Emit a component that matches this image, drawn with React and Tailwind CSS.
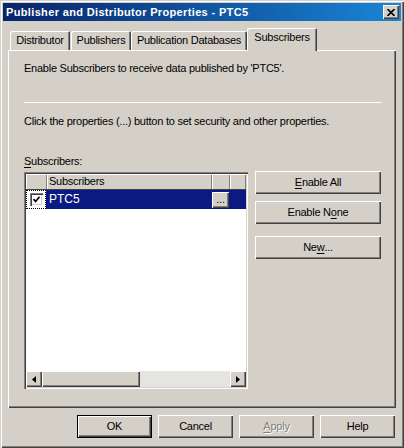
import React from 'react';

// Win2000 3D edges
const raised = "shadow-[inset_1px_1px_#ffffff,inset_-1px_-1px_#404040,inset_-2px_-2px_#808080]";
const sunken = "shadow-[inset_1px_1px_#808080,inset_2px_2px_#404040,inset_-1px_-1px_#ffffff,inset_-2px_-2px_#d4d0c8]";

function Key({ children }) {
  return <span className="underline underline-offset-[2px]">{children}</span>;
}

function Tab({ label, w, selected }) {
  return selected ? (
    <div className={`relative z-10 h-[23px] ${w} bg-[#d4d0c8] flex items-start justify-center pt-[3px] rounded-t-[2px] shadow-[inset_1px_1px_#ffffff,inset_-1px_0_#404040,inset_-2px_0_#808080]`}>
      {label}
    </div>
  ) : (
    <div className={`h-[19px] mb-[1px] ${w} bg-[#d4d0c8] flex items-start justify-center pt-[3px] rounded-t-[2px] shadow-[inset_1px_1px_#ffffff,inset_-1px_0_#404040,inset_-2px_0_#808080]`}>
      {label}
    </div>
  );
}

function Button({ children, className = "" }) {
  return (
    <div className={`h-[23px] bg-[#d4d0c8] flex items-center justify-center ${raised} ${className}`}>
      {children}
    </div>
  );
}

function Arrow({ dir }) {
  return (
    <div className={`w-[16px] h-[16px] bg-[#d4d0c8] flex items-center justify-center ${raised}`}>
      <svg width="4" height="7" viewBox="0 0 4 7">
        {dir === 'left' ? <path d="M4 0 L0 3.5 L4 7 Z" fill="#000" /> : <path d="M0 0 L4 3.5 L0 7 Z" fill="#000" />}
      </svg>
    </div>
  );
}

export default function App() {
  return (
    <div
      className="w-[404px] h-[448px] bg-[#d4d0c8] p-[3px] flex flex-col text-[11px] leading-[13px] text-black tracking-[-0.25px] shadow-[inset_1px_1px_#d4d0c8,inset_2px_2px_#ffffff,inset_-1px_-1px_#404040,inset_-2px_-2px_#808080]"
      style={{ fontFamily: "'Liberation Sans', Arial, sans-serif" }}
    >
      {/* title bar */}
      <div className="h-[18px] flex items-center pl-[3px] pr-[2px] bg-linear-to-r from-[#0a246a] to-[#1a86d6]">
        <span className="flex-1 font-bold text-white tracking-[0.35px]">Publisher and Distributor Properties - PTC5</span>
        <div className={`w-[16px] h-[14px] bg-[#d4d0c8] flex items-center justify-center ${raised}`}>
          <svg width="8" height="7" viewBox="0 0 8 7">
            <path d="M0.5 0 L7.5 7 M7.5 0 L0.5 7" stroke="#000" strokeWidth="1.6" />
          </svg>
        </div>
      </div>

      <div className="px-[5px] pt-[7px] flex flex-col">
        {/* tabs */}
        <div className="relative z-10 h-[23px] -mb-[1px] pl-[2px] flex items-end">
          <Tab label="Distributor" w="w-[60px]" />
          <div className="w-[1px]" />
          <Tab label="Publishers" w="w-[60px]" />
          <Tab label="Publication Databases" w="w-[116px]" />
          <Tab label="Subscribers" w="w-[70px]" selected />
        </div>

        {/* panel */}
        <div className="h-[358px] pl-[16px] pr-[14px] pt-[12px] flex flex-col shadow-[inset_1px_1px_#ffffff,inset_-1px_-1px_#404040,inset_-2px_-2px_#808080]">
          <p>Enable Subscribers to receive data published by 'PTC5'.</p>
          <div className="mt-[27px] h-[1px] bg-white" />
          <p className="mt-[12px]">Click the properties (...) button to set security and other properties.</p>
          <p className="mt-[27px]"><Key>S</Key>ubscribers:</p>

          <div className="mt-[3px] flex items-start">
            {/* list */}
            <div className={`mt-[1px] w-[224px] h-[217px] bg-white p-[2px] flex flex-col ${sunken}`}>
              <div className="h-[16px] flex bg-[#d4d0c8] border-b border-[#404040]">
                <div className="w-[21px] shadow-[inset_1px_1px_#ffffff,inset_-1px_0_#808080]" />
                <div className="w-[165px] pl-[2px] pt-[1px] shadow-[inset_1px_1px_#ffffff,inset_-1px_0_#808080]">Subscribers</div>
                <div className="w-[18px] shadow-[inset_1px_1px_#ffffff,inset_-1px_0_#808080]" />
                <div className="flex-1 shadow-[inset_1px_1px_#ffffff,inset_-1px_0_#808080]" />
              </div>
              <div className="h-[19px] flex items-center bg-[#0a1a82]">
                <div className="w-[20px] h-[19px] bg-white border border-dotted border-black flex items-center justify-center">
                  <div className={`w-[13px] h-[13px] bg-white flex items-center justify-center ${sunken}`}>
                    <svg width="7" height="7" viewBox="0 0 7 7">
                      <path d="M0.5 3 L2.6 5.4 L6.5 0.8" stroke="#000" strokeWidth="1.6" fill="none" />
                    </svg>
                  </div>
                </div>
                <span className="w-[166px] pl-[3px] text-white text-[12px] tracking-normal">PTC5</span>
                <div className={`w-[17px] h-[16px] bg-[#d4d0c8] flex items-end justify-center pb-[3px] leading-none ${raised}`}>...</div>
              </div>
              <div className="flex-1" />
              {/* horizontal scrollbar */}
              <div className="h-[16px] flex">
                <Arrow dir="left" />
                <div className={`w-[98px] bg-[#d4d0c8] ${raised}`} />
                <div className="flex-1 bg-[#e6e4e0]" />
                <Arrow dir="right" />
              </div>
            </div>

            {/* side buttons */}
            <div className="ml-[7px] w-[126px] flex flex-col">
              <Button><Key>E</Key>nable All</Button>
              <Button className="mt-[7px]">Enable N<Key>o</Key>ne</Button>
              <Button className="mt-[12px]">Ne<Key>w</Key>...</Button>
            </div>
          </div>
        </div>

        {/* dialog buttons */}
        <div className="mt-[7px] flex justify-end gap-[6px] pr-[1px]">
          <div className="w-[75px] h-[23px] border border-black">
            <div className={`h-full bg-[#d4d0c8] flex items-center justify-center ${raised}`}>OK</div>
          </div>
          <Button className="w-[75px]">Cancel</Button>
          <Button className="w-[75px] text-[#808080] [text-shadow:1px_1px_#ffffff]"><Key>A</Key>pply</Button>
          <Button className="w-[75px]">Help</Button>
        </div>
      </div>
    </div>
  );
}
